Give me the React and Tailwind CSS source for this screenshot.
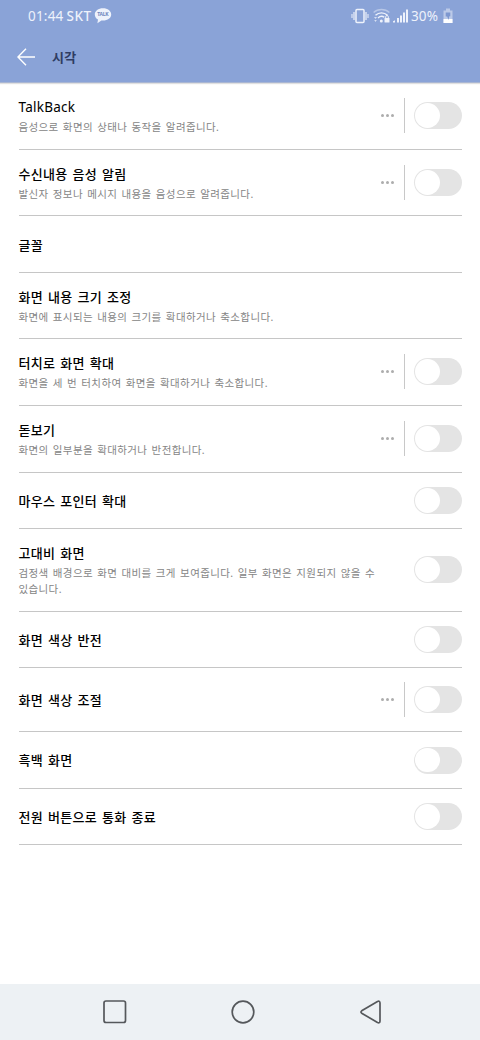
import React, { useState } from 'react'

const settings = [
  { title: 'TalkBack', desc: '음성으로 화면의 상태나 동작을 알려줍니다.', more: true, toggle: true, height: 'h-[67px] pb-px', latin: true },
  { title: '수신내용 음성 알림', desc: '발신자 정보나 메시지 내용을 음성으로 알려줍니다.', more: true, toggle: true, height: 'h-[66px]' },
  { title: '글꼴', height: 'h-[57px] pt-[2px]' },
  { title: '화면 내용 크기 조정', desc: '화면에 표시되는 내용의 크기를 확대하거나 축소합니다.', height: 'h-[66px]' },
  { title: '터치로 화면 확대', desc: '화면을 세 번 터치하여 화면을 확대하거나 축소합니다.', more: true, toggle: true, height: 'h-[67px] pb-px' },
  { title: '돋보기', desc: '화면의 일부분을 확대하거나 반전합니다.', more: true, toggle: true, height: 'h-[67px] pb-px' },
  { title: '마우스 포인터 확대', toggle: true, height: 'h-[56px]' },
  { title: '고대비 화면', desc: '검정색 배경으로 화면 대비를 크게 보여줍니다. 일부 화면은 지원되지 않을 수 있습니다.', toggle: true, height: 'h-[83px] pb-px' },
  { title: '화면 색상 반전', toggle: true, height: 'h-[56px]' },
  { title: '화면 색상 조절', more: true, toggle: true, height: 'h-[64px]' },
  { title: '흑백 화면', toggle: true, height: 'h-[57px]' },
  { title: '전원 버튼으로 통화 종료', toggle: true, height: 'h-[56px]' },
]

const Toggle = ({ label }) => {
  const [on, setOn] = useState(false)

  return (
    <button
      role="switch"
      aria-checked={on}
      aria-label={label}
      onClick={() => setOn(!on)}
      className={`flex h-[27px] w-[47.5px] shrink-0 items-center rounded-full px-px ${on ? 'justify-end bg-[#8aa3d7]' : 'bg-[#e4e4e4]'}`}
    >
      <span className="size-[24.5px] rounded-full bg-white" />
    </button>
  )
}

const MoreButton = () => (
  <div className="mr-[9px] flex h-[35px] shrink-0 items-center border-r border-[#c8c8c8] pr-[10px]">
    <button aria-label="더보기" className="flex gap-[2px]">
      <span className="size-[3px] rounded-full bg-[#adadad]" />
      <span className="size-[3px] rounded-full bg-[#adadad]" />
      <span className="size-[3px] rounded-full bg-[#adadad]" />
    </button>
  </div>
)

const SettingRow = ({ item }) => (
  <li className={`flex items-center border-b border-[#c6c6c6] ${item.height}`}>
    <div className="min-w-0 flex-1">
      <p className={`leading-[20px] text-black ${item.latin ? 'text-[13.5px] tracking-[0.25px]' : 'text-[13px] font-medium tracking-[0.3px] [word-spacing:1.3px]'}`}>
        {item.title}
      </p>
      {item.desc && (
        <p className="mt-[2px] w-[365px] text-[10.5px] leading-[16px] tracking-[0.38px] text-[#858585] [word-spacing:1.1px]">{item.desc}</p>
      )}
    </div>
    {item.more && <MoreButton />}
    {item.toggle && <Toggle label={item.title} />}
  </li>
)

const StatusBar = () => (
  <div className="flex h-8 items-center pr-[27px] pl-[28px] text-[13.5px] leading-none text-[#eef2fb]">
    <span className="pt-px tracking-[0.2px]">01:44</span>
    <span className="ml-[3px] pt-px font-medium tracking-[0.5px]">SKT</span>
    <svg className="ml-[2px]" width="18" height="17" viewBox="0 0 18 17">
      <path d="M9 .3C4.300 .3 .8 2.900 .8 6.400c0 2.200 1.300 4 3.200 5.100L3.400 15.300l4-2.900H9c4.700 0 8.200-2.500 8.200-6S13.700 .3 9 .3z" fill="#eef2fb" />
      <text x="3.200" y="8.400" fontSize="5" fontWeight="700" fill="#6f87bd" textLength="11.500">TALK</text>
    </svg>

    <svg className="ml-auto" width="18" height="16" viewBox="0 0 18 16" fill="none" stroke="#eef2fb">
      <rect x="5" y="1.500" width="8" height="13" rx="1" strokeWidth="1.500" />
      <path d="M3 4v8M15 4v8" strokeWidth="1.200" />
      <path d="M1 6v4M17 6v4" strokeWidth="1" />
    </svg>
    <svg className="ml-[4px]" width="17" height="16" viewBox="0 0 17 16" fill="none" stroke="#eef2fb" strokeWidth="1.400">
      <path d="M.6 4.500C5 .4 12 .4 16.400 4.500" opacity=".45" />
      <path d="M2.500 7.300c3.500-3.300 8.500-3.300 12 0M5 10c2-1.900 4.600-1.900 6.300-.7" />
      <path d="M1 9.200l1.500 1.500L4 9.200zM1.200 12.300h2.600l-1.300 1.500z" fill="#eef2fb" stroke="none" />
      <circle cx="8.300" cy="13" r="1.500" fill="#eef2fb" stroke="none" />
      <rect x="11.500" y="10" width="5" height="4.500" rx=".5" fill="#eef2fb" stroke="none" />
      <path d="M12.700 10V8.800a1.300 1.300 0 0 1 2.600 0V10" strokeWidth="1" />
    </svg>
    <svg className="ml-[3px]" width="15" height="16" viewBox="0 0 15 16" fill="#eef2fb">
      <path d="M0 14.500v-1.200l2-1v2.200zM4 10h2v4.500H4zM7 7.500h2v7H7zM10 4.500h2v10h-2zM13 1.500h2v13h-2z" />
    </svg>
    <span className="ml-[3px] pt-px tracking-[0.1px]">30%</span>
    <svg className="ml-[5px]" width="10" height="16" viewBox="0 0 10 16">
      <path d="M3 .5h4v2h2.500V15H.5V2.500H3z" fill="#bccae8" />
      <path d="M.5 11h9v4h-9z" fill="#fff" />
      <path d="M2.700 4.500h4.600v3.800h-1L5.500 12 4.200 8.500H2.700z" fill="#7d97cf" />
    </svg>
  </div>
)

const Header = () => (
  <header className="h-[83px] border-b border-[#a9b6d3] bg-[#8aa3d7] shadow-[0_1px_1px_rgba(0,0,0,0.12)]">
    <StatusBar />
    <div className="flex h-[50px] items-center pl-[17px]">
      <button aria-label="뒤로">
        <svg width="18" height="18" viewBox="0 0 18 18" fill="none" stroke="#fff" strokeWidth="1.400">
          <path d="M9 .8L.9 9 9 17.200M1 9h17" />
        </svg>
      </button>
      <h1 className="ml-[17px] text-[13px] leading-[20px] font-bold tracking-[0.3px] text-[#2f3c62]">시각</h1>
    </div>
  </header>
)

const NavBar = () => (
  <nav className="flex h-14 items-center justify-between bg-[#edf1f4] pr-[98px] pl-[103px]">
    <svg width="24" height="24" viewBox="0 0 24 24" fill="none" stroke="#55585b" strokeWidth="1.700">
      <rect x="1" y="1" width="21.500" height="21.500" rx="2" />
    </svg>
    <svg className="-ml-[2px]" width="24" height="24" viewBox="0 0 24 24" fill="none" stroke="#55585b" strokeWidth="1.700">
      <circle cx="12" cy="12" r="10.800" />
    </svg>
    <svg width="22" height="24" viewBox="0 0 22 24" fill="none" stroke="#55585b" strokeWidth="1.700" strokeLinejoin="round">
      <path d="M1.700 10.800L17.500 1.500Q20 .5 20 3v18q0 2.500-2.500 1.500L1.700 13.200q-1.500-1.200 0-2.400z" />
    </svg>
  </nav>
)

const App = () => {
  return (
    <div className="flex h-[1040px] w-[480px] flex-col bg-white font-['Noto_Sans','Noto_Sans_CJK_KR',sans-serif] break-keep">
      <Header />
      <ul className="flex-1 pr-[18.5px] pl-[18.5px]">
        {settings.map((item) => (
          <SettingRow key={item.title} item={item} />
        ))}
      </ul>
      <NavBar />
    </div>
  )
}

export default App
